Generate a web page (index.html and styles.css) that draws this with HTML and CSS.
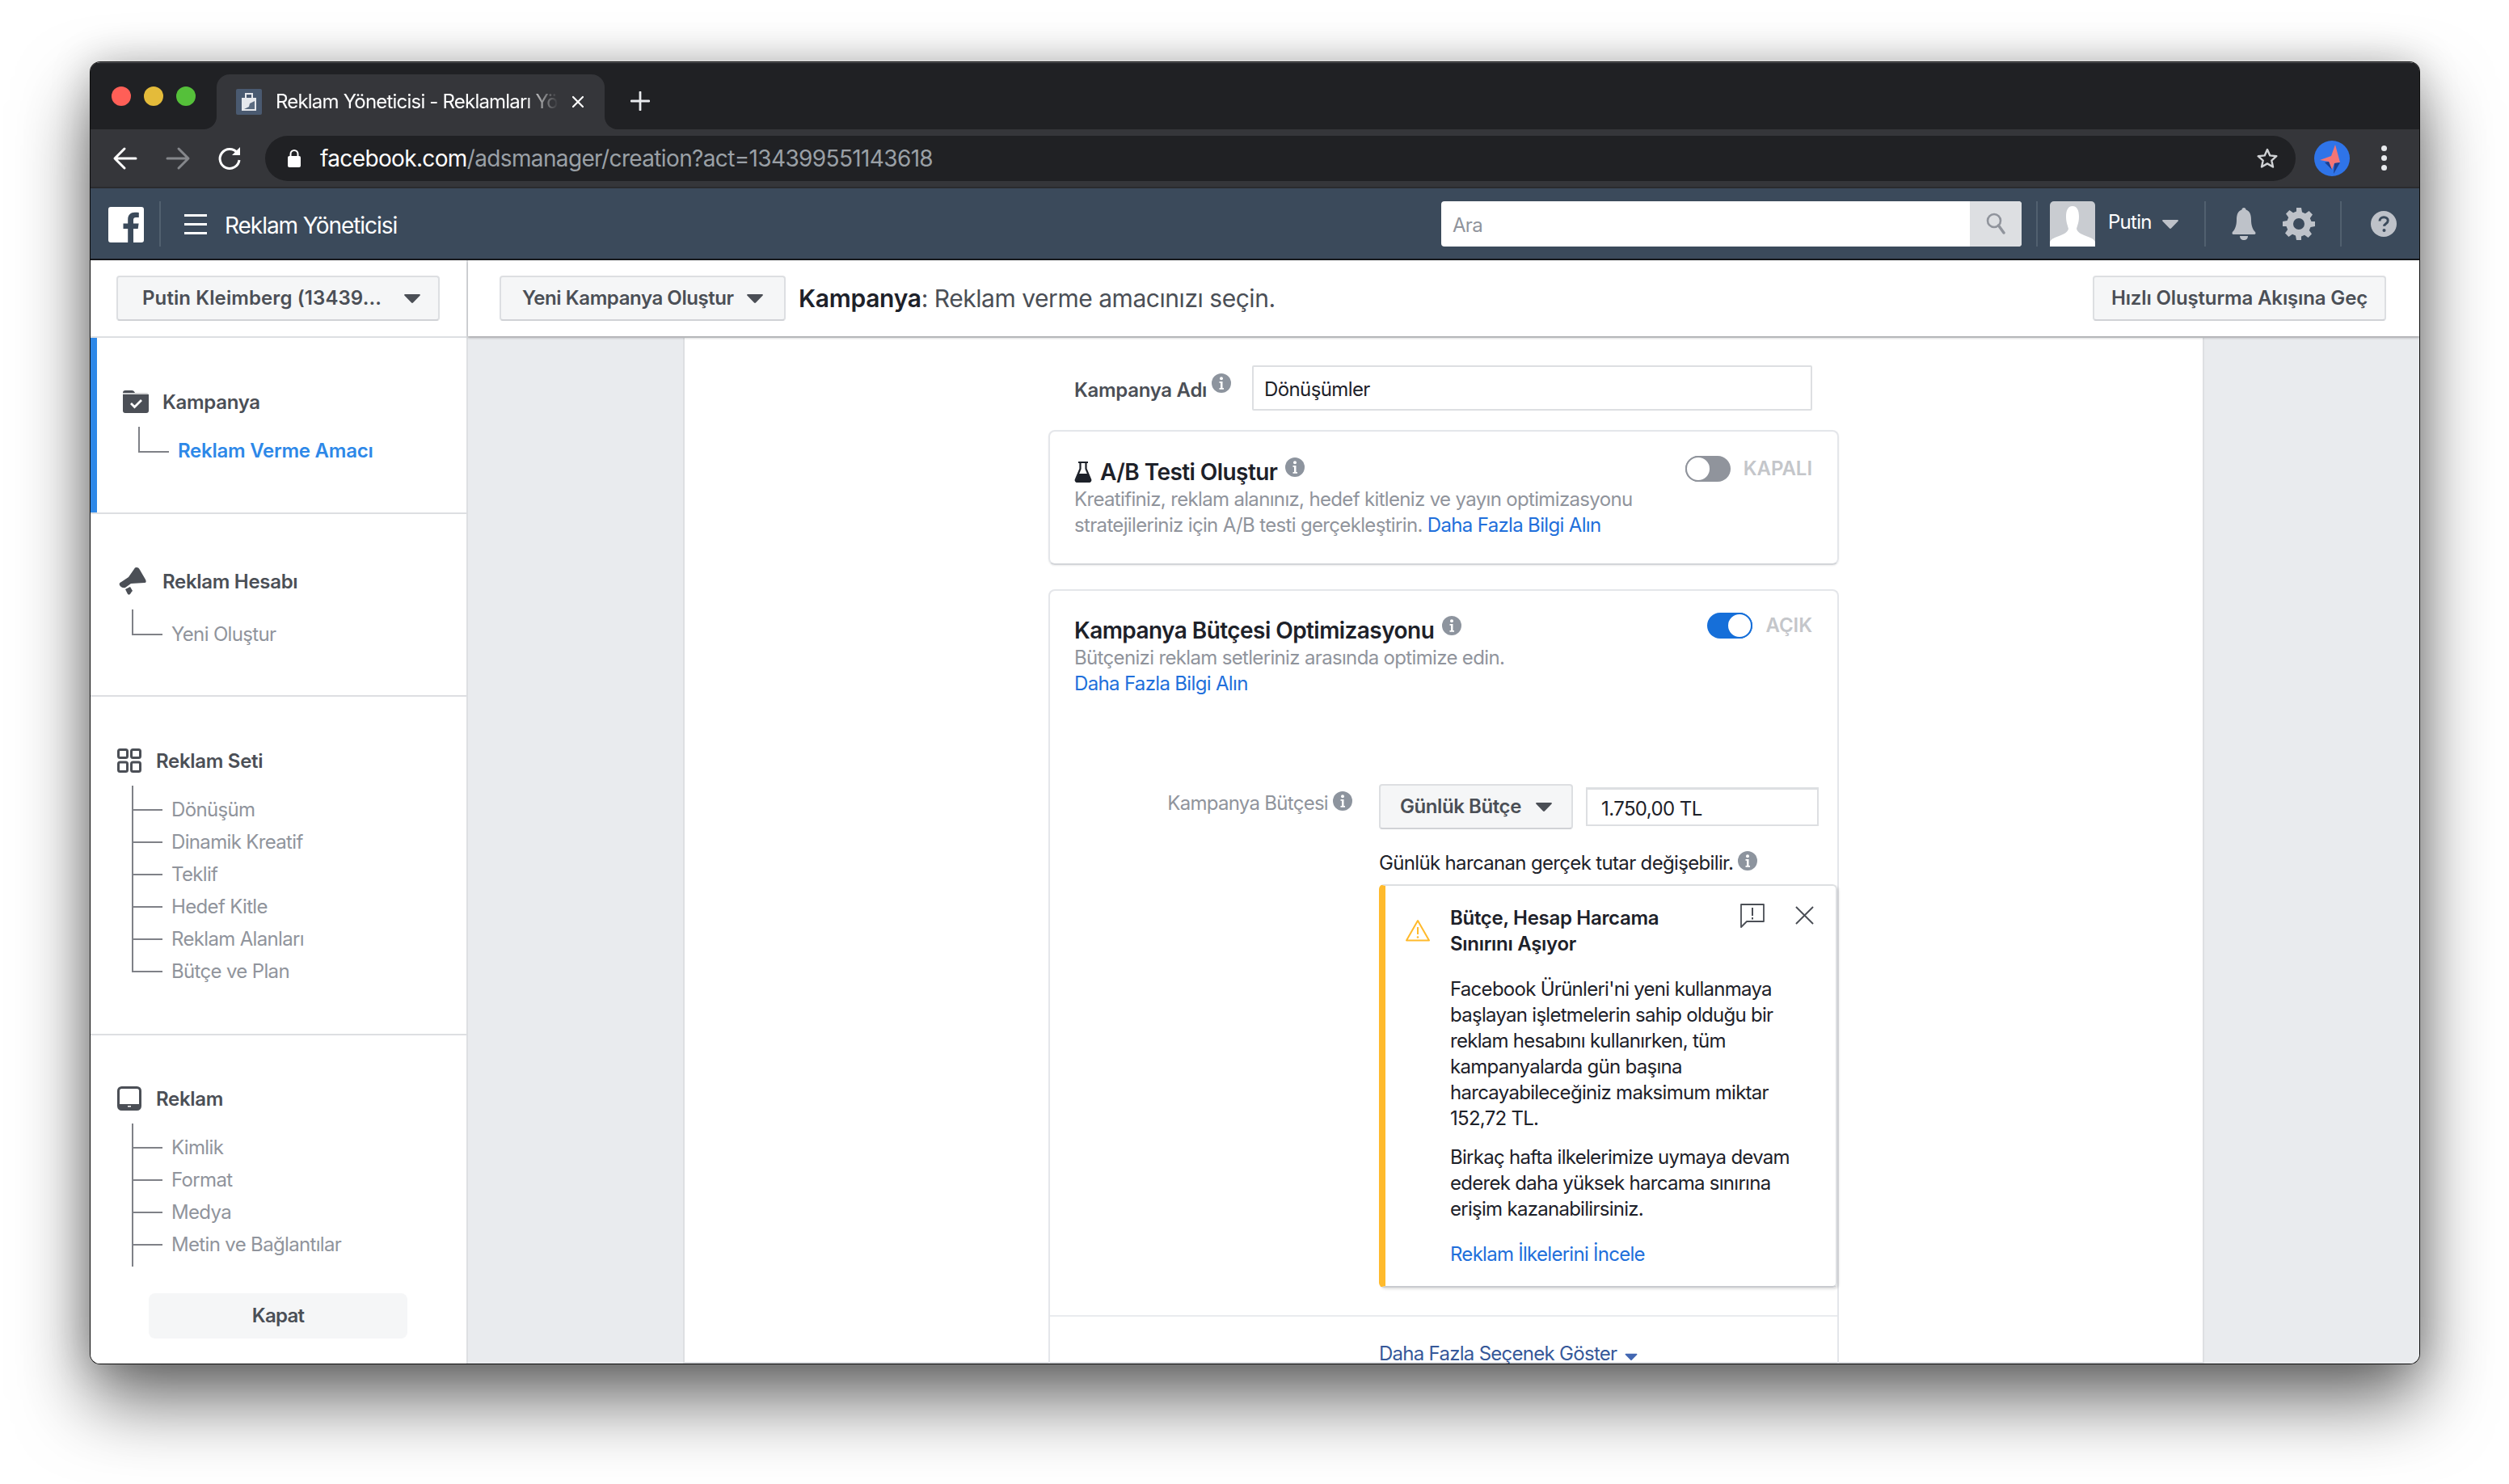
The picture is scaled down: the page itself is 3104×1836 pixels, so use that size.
FILE: index.html
```html
<!DOCTYPE html>
<html lang="tr">

<head>
  <meta charset="UTF-8">
  <title>Reklam Yöneticisi</title>
  <link rel="stylesheet" href="styles.css">
</head>

<body>
  <svg class="defs" width="0" height="0">
    <symbol id="i-info" viewBox="0 0 24 24">
      <circle cx="12" cy="12" r="12" fill="#8d949e" />
      <circle cx="12" cy="6.200" r="2" fill="#fff" />
      <path d="M9.500 10h4v8H15v1.800H9.500V18H11v-6.200H9.500z" fill="#fff" />
    </symbol>
    <symbol id="i-caret" viewBox="0 0 20 12">
      <path d="M1 1h18a1 1 0 0 1 .7 1.600l-8.500 8.600a1.600 1.600 0 0 1-2.400 0L.3 2.600A1 1 0 0 1 1 1z" />
    </symbol>
  </svg>

  <div class="window">
    <!-- browser chrome -->
    <div class="tabstrip">
      <div class="strip-left">
        <span class="light red"></span>
        <span class="light yellow"></span>
        <span class="light green"></span>
      </div>
      <div class="tab">
        <svg class="favicon" viewBox="0 0 32 32">
          <rect width="32" height="32" rx="2" fill="#4a5a70" />
          <rect x="7" y="11" width="18" height="16" fill="#e6e8ec" />
          <path d="M12 11V6h8v5" fill="none" stroke="#e6e8ec" stroke-width="2" />
          <path d="M10 25l6-3 1-4 6-3v10z" fill="#5b6b80" />
        </svg>
        <span class="tab-title">Reklam Yöneticisi - Reklamları Yönetin</span>
        <svg class="tab-close" viewBox="0 0 16 16">
          <path d="M2 2l12 12M14 2L2 14" stroke="#fff" stroke-width="2.200" stroke-linecap="round" />
        </svg>
      </div>
      <div class="strip-right">
        <svg class="tab-new" viewBox="0 0 24 24">
          <path d="M12 1v22M1 12h22" stroke="#e8eaed" stroke-width="2.800" stroke-linecap="round" />
        </svg>
      </div>
    </div>

    <div class="toolbar">
      <svg class="nav-icon" viewBox="0 0 32 32">
        <path d="M29 16H4M15 4L3 16l12 12" fill="none" stroke="#fff" stroke-width="3" stroke-linecap="round" stroke-linejoin="round" />
      </svg>
      <svg class="nav-icon forward" viewBox="0 0 32 32">
        <path d="M3 16h25M17 4l12 12-12 12" fill="none" stroke="#85878b" stroke-width="3" stroke-linecap="round" stroke-linejoin="round" />
      </svg>
      <svg class="nav-icon reload" viewBox="0 0 32 32">
        <path d="M25.500 9A12 12 0 1 0 28 18" fill="none" stroke="#fff" stroke-width="3" />
        <path d="M29 2v10H19z" fill="#fff" />
      </svg>
      <div class="urlbar">
        <svg class="lock" viewBox="0 0 16 22">
          <rect y="8" width="16" height="14" rx="2" fill="#fff" />
          <path d="M3.500 9V5.500a4.500 4.500 0 0 1 9 0V9" fill="none" stroke="#fff" stroke-width="2" />
        </svg>
        <span class="url"><b>facebook.com</b>/adsmanager/creation?act=134399551143618</span>
        <svg class="star" viewBox="0 0 28 28">
          <path d="M14 3l3.300 7.400 8 .8-6 5.400 1.700 7.900L14 20.400 7 24.500l1.700-7.900-6-5.400 8-.8z" fill="none" stroke="#d0d2d5" stroke-width="2.400" stroke-linejoin="round" />
        </svg>
      </div>
      <svg class="profile" viewBox="0 0 44 44">
        <circle cx="22" cy="22" r="22" fill="#2f74e8" />
        <path d="M26 5l6 22-7 1-3 8-4-10-11-2 14-5z" fill="#f47575" />
        <path d="M22 36l-4-10-5 1z" fill="#1c3f8f" />
        <path d="M32 27l-8 14 1-13z" fill="#1c3f8f" />
      </svg>
      <div class="menu-dots"><span></span><span></span><span></span></div>
    </div>

    <!-- ads manager header -->
    <header class="fbbar">
      <svg class="fb-logo" viewBox="0 0 44 44">
        <path d="M3 0h38a3 3 0 0 1 3 3v38a3 3 0 0 1-3 3H31V27h5.700l.9-6.600H31v-4.200c0-1.900.5-3.200 3.300-3.200h3.500V7.100c-.6-.1-2.700-.3-5.100-.3-5 0-8.500 3.100-8.500 8.700v4.900h-5.700V27h5.700v17H3a3 3 0 0 1-3-3V3a3 3 0 0 1 3-3z" fill="#fff" />
      </svg>
      <span class="fb-sep"></span>
      <div class="burger"><span></span><span></span><span></span></div>
      <span class="fb-title">Reklam Yöneticisi</span>
      <div class="search">
        <span class="search-text">Ara</span>
        <span class="search-btn">
          <svg viewBox="0 0 24 28" width="24" height="28">
            <circle cx="10" cy="10" r="8" fill="none" stroke="#90949c" stroke-width="2.600" />
            <path d="M15.500 16l6.500 9" stroke="#90949c" stroke-width="3.400" stroke-linecap="round" />
          </svg>
        </span>
      </div>
      <span class="fb-sep sep-a"></span>
      <svg class="user-pic" viewBox="0 0 56 56">
        <rect width="56" height="56" rx="5" fill="#c9ccd1" />
        <path d="M28 6c6 0 8 6 8 13 0 7-2 11-3 15 1 6 10 8 19 12 2 1 4 3 4 5v5H0v-5c0-2 2-4 4-5 9-4 18-6 19-12-1-4-3-8-3-15 0-7 2-13 8-13z" fill="#fff" />
      </svg>
      <span class="user-name">Putin</span>
      <svg class="user-caret"><use href="#i-caret" /></svg>
      <span class="fb-sep sep-b"></span>
      <svg class="bell" viewBox="0 0 30 40">
        <path d="M15 0c1.500 0 2.500 1 2.600 2.600C22.500 4 24 9 24 15c0 7 2 12 5 15 1 1 .5 3-1 3H2c-1.500 0-2-2-1-3 3-3 5-8 5-15 0-6 1.500-11 6.400-12.400C12.500 1 13.500 0 15 0z" fill="#bec2c9" />
        <path d="M10 35h10c0 3-2 5-5 5s-5-2-5-5z" fill="#bec2c9" />
      </svg>
      <svg class="gear" viewBox="0 0 40 40">
        <path d="M17 0h6l1 5.500 4 1.700 4.600-3.200 4.400 4.400-3.200 4.600 1.700 4L40 17v6l-5.500 1-1.700 4 3.200 4.600-4.400 4.400-4.600-3.200-4 1.700L23 40h-6l-1-5.500-4-1.700-4.600 3.200L3 31.600l3.200-4.600-1.700-4L0 23v-6l5.500-1 1.700-4L4 7.400 8.400 3 13 6.200l4-1.700zM20 13a7 7 0 1 0 0 14 7 7 0 0 0 0-14z" fill="#bec2c9" fill-rule="evenodd" />
      </svg>
      <span class="fb-sep sep-c"></span>
      <svg class="help" viewBox="0 0 32 32">
        <circle cx="16" cy="16" r="16" fill="#bec2c9" />
        <path d="M11 12.500c0-3 2.200-4.700 5.200-4.700 3 0 5 1.700 5 4.200 0 3.800-4.600 3.600-4.600 6.800" fill="none" stroke="#3b4a5b" stroke-width="3" />
        <circle cx="16.500" cy="24" r="2" fill="#3b4a5b" />
      </svg>
    </header>

    <div class="subbar">
      <div class="sub-left">
        <button class="btn btn-account">
          <span>Putin Kleimberg (13439...</span>
          <svg class="btn-caret"><use href="#i-caret" /></svg>
        </button>
      </div>
      <div class="sub-right">
        <button class="btn btn-new">
          <span>Yeni Kampanya Oluştur</span>
          <svg class="btn-caret"><use href="#i-caret" /></svg>
        </button>
        <div class="sub-title"><b>Kampanya</b>: Reklam verme amacınızı seçin.</div>
        <button class="btn btn-quick">Hızlı Oluşturma Akışına Geç</button>
      </div>
    </div>

    <div class="content">
      <!-- left tree -->
      <aside class="sidebar">
        <section class="side-section active s-campaign">
          <div class="side-head">
            <svg class="ic-folder" viewBox="0 0 32 28">
              <path d="M3 0h8c2 0 3 1 4 3h14a3 3 0 0 1 3 3v19a3 3 0 0 1-3 3H3a3 3 0 0 1-3-3V3a3 3 0 0 1 3-3z" fill="#4b4f56" />
              <path d="M0 4h32" stroke="#fff" stroke-width="1.500" />
              <path d="M10 16l4.500 4.500L23 12" fill="none" stroke="#fff" stroke-width="2.800" />
            </svg>
            <span>Kampanya</span>
          </div>
          <ul class="tree tree-end">
            <li class="current">Reklam Verme Amacı</li>
          </ul>
        </section>

        <section class="side-section s-account">
          <div class="side-head">
            <svg class="ic-horn" viewBox="0 0 34 34">
              <path d="M22 0c2 0 3 1 4 3l7 12c1 2 1 4-1 4l-17 1-7 5c-3 1-6-1-7-3-1-2 0-3 2-4l9-6 7-10c1-2 2-2 3-2z" fill="#4b4f56" />
              <path d="M8 27l6-3 3 5-1 1-2 3c-1 1-2 1-3 0z" fill="#4b4f56" />
            </svg>
            <span>Reklam Hesabı</span>
          </div>
          <ul class="tree tree-end">
            <li>Yeni Oluştur</li>
          </ul>
        </section>

        <section class="side-section s-set">
          <div class="side-head">
            <svg class="ic-grid" viewBox="0 0 30 30">
              <g fill="none" stroke="#4b4f56" stroke-width="3">
                <rect x="1.500" y="1.500" width="11" height="10" rx="2" />
                <rect x="17.500" y="1.500" width="11" height="10" rx="2" />
                <rect x="1.500" y="17" width="11" height="11.500" rx="2" />
                <rect x="17.500" y="17" width="11" height="11.500" rx="2" />
              </g>
            </svg>
            <span>Reklam Seti</span>
          </div>
          <ul class="tree tree-end">
            <li>Dönüşüm</li>
            <li>Dinamik Kreatif</li>
            <li>Teklif</li>
            <li>Hedef Kitle</li>
            <li>Reklam Alanları</li>
            <li>Bütçe ve Plan</li>
          </ul>
        </section>

        <section class="side-section s-ad">
          <div class="side-head">
            <svg class="ic-tablet" viewBox="0 0 30 30">
              <rect x="1.500" y="1.500" width="27" height="27" rx="4" fill="none" stroke="#4b4f56" stroke-width="3" />
              <path d="M2 22h26v5H2z" fill="#4b4f56" />
              <rect x="13" y="24" width="4" height="1.500" fill="#fff" />
            </svg>
            <span>Reklam</span>
          </div>
          <ul class="tree tree-open">
            <li>Kimlik</li>
            <li>Format</li>
            <li>Medya</li>
            <li>Metin ve Bağlantılar</li>
          </ul>
          <button class="close-btn">Kapat</button>
        </section>
      </aside>

      <!-- form column -->
      <main class="main">
        <div class="column">
          <div class="form">
            <div class="name-row">
              <label class="name-label">Kampanya Adı <svg class="info"><use href="#i-info" /></svg></label>
              <div class="name-input">Dönüşümler</div>
            </div>

            <div class="card card-ab">
              <div class="card-head">
                <div class="card-title">
                  <svg class="flask" viewBox="0 0 22 26">
                    <path d="M5 1h12M7.500 1v8L2 22a2 2 0 0 0 2 3h14a2 2 0 0 0 2-3L14.500 9V1" fill="none" stroke="#1d2129" stroke-width="2.200" />
                    <path d="M5.500 15h11l4 9H2z" fill="#1d2129" />
                  </svg>
                  <span>A/B Testi Oluştur</span>
                  <svg class="info"><use href="#i-info" /></svg>
                </div>
                <div class="switch-wrap">
                  <span class="toggle"><i></i></span>
                  <span class="switch-text">KAPALI</span>
                </div>
              </div>
              <p class="card-desc">Kreatifiniz, reklam alanınız, hedef kitleniz ve yayın optimizasyonu<br>stratejileriniz için A/B testi gerçekleştirin. <a href="#">Daha Fazla Bilgi Alın</a></p>
            </div>

            <div class="card card-budget">
              <div class="card-head">
                <div class="card-title">
                  <span>Kampanya Bütçesi Optimizasyonu</span>
                  <svg class="info"><use href="#i-info" /></svg>
                </div>
                <div class="switch-wrap">
                  <span class="toggle on"><i></i></span>
                  <span class="switch-text">AÇIK</span>
                </div>
              </div>
              <p class="card-desc">Bütçenizi reklam setleriniz arasında optimize edin.<br><a href="#">Daha Fazla Bilgi Alın</a></p>

              <div class="budget-row">
                <div class="budget-label">Kampanya Bütçesi <svg class="info"><use href="#i-info" /></svg></div>
                <button class="btn btn-daily">
                  <span>Günlük Bütçe</span>
                  <svg class="btn-caret"><use href="#i-caret" /></svg>
                </button>
                <div class="budget-input">1.750,00 TL</div>
              </div>

              <div class="indented budget-note">Günlük harcanan gerçek tutar değişebilir. <svg class="info"><use href="#i-info" /></svg></div>

              <div class="indented alert">
                <svg class="alert-icon" viewBox="0 0 32 28">
                  <path d="M16 2L2 26.500h28z" fill="none" stroke="#ffba2c" stroke-width="2" stroke-linejoin="round" />
                  <path d="M16 10v9" stroke="#ffba2c" stroke-width="2" />
                  <circle cx="16" cy="22.500" r="1.300" fill="#ffba2c" />
                </svg>
                <div class="alert-body">
                  <div class="alert-top">
                    <h4>Bütçe, Hesap Harcama<br>Sınırını Aşıyor</h4>
                    <div class="alert-actions">
                      <svg class="feedback" viewBox="0 0 30 30">
                        <path d="M1 1h28v21H8l-7 7z" fill="none" stroke="#4b4f56" stroke-width="1.800" stroke-linejoin="round" />
                        <path d="M15 5v10M15 17v2.500" stroke="#4b4f56" stroke-width="2" />
                      </svg>
                      <svg class="alert-close" viewBox="0 0 24 24">
                        <path d="M1 1l22 22M23 1L1 23" stroke="#4b4f56" stroke-width="2" />
                      </svg>
                    </div>
                  </div>
                  <p>Facebook Ürünleri'ni yeni kullanmaya<br>başlayan işletmelerin sahip olduğu bir<br>reklam hesabını kullanırken, tüm<br>kampanyalarda gün başına<br>harcayabileceğiniz maksimum miktar<br>152,72 TL.</p>
                  <p>Birkaç hafta ilkelerimize uymaya devam<br>ederek daha yüksek harcama sınırına<br>erişim kazanabilirsiniz.</p>
                  <a class="alert-link" href="#">Reklam İlkelerini İncele</a>
                </div>
              </div>

              <div class="card-divider"></div>

              <a class="indented more-link" href="#">Daha Fazla Seçenek Göster
                <svg class="more-caret"><use href="#i-caret" /></svg>
              </a>
            </div>
          </div>
        </div>
      </main>
    </div>
  </div>
</body>

</html>
```

FILE: styles.css
```css
html,
body {
  margin: 0;
  padding: 0;
  height: 1836px;
  overflow: hidden;
  background: #fff;
}

body {
  font-family: Inter, "Noto Sans", sans-serif;
  font-size: 24px;
  line-height: 32px;
  letter-spacing: -.72px;
  color: #1d2129;
}

a {
  color: #216fdb;
  text-decoration: none;
}

p {
  margin: 0;
}

button {
  font: inherit;
  letter-spacing: inherit;
}

svg {
  flex: none;
}

.defs {
  display: block;
  height: 0;
}

/* window */
.window {
  margin: 77px 0 0 112px;
  width: 2881px;
  height: 1610px;
  display: flex;
  flex-direction: column;
  overflow: hidden;
  border-radius: 12px;
  background: #fff;
  box-shadow: 0 0 0 1px #0c0c0c, 0 46px 90px rgba(0, 0, 0, .58), 0 0 50px rgba(0, 0, 0, .22);
}

/* tab strip */
.tabstrip {
  height: 83px;
  flex: none;
  display: flex;
  background: linear-gradient(#202124 60%, #35363a 60%);
  border-top: 1px solid #55565a;
  box-sizing: border-box;
}

.strip-left {
  width: 156px;
  display: flex;
  gap: 16px;
  padding: 29px 0 0 26px;
  box-sizing: border-box;
  background: #202124;
  border-bottom-right-radius: 16px;
}

.light {
  width: 24px;
  height: 24px;
  border-radius: 50%;
}

.red {
  background: #ff5f57;
}

.yellow {
  background: #e4bb3a;
}

.green {
  background: #55c03a;
}

.tab {
  width: 480px;
  height: 68px;
  margin-top: 14px;
  display: flex;
  align-items: center;
  padding: 0 24px;
  box-sizing: border-box;
  background: #35363a;
  border-radius: 16px 16px 0 0;
}

.favicon {
  width: 32px;
  height: 32px;
}

.tab-title {
  margin-left: 17px;
  width: 350px;
  flex: none;
  white-space: nowrap;
  overflow: hidden;
  color: #fff;
  letter-spacing: -.8px;
  -webkit-mask-image: linear-gradient(90deg, #000 88%, transparent 100%);
  mask-image: linear-gradient(90deg, #000 88%, transparent 100%);
}

.tab-close {
  width: 16px;
  height: 16px;
  margin-left: 16px;
}

.strip-right {
  flex: 1;
  background: #202124;
  border-bottom-left-radius: 16px;
  display: flex;
  padding: 35px 0 0 32px;
  box-sizing: border-box;
}

.tab-new {
  width: 24px;
  height: 24px;
}

/* toolbar */
.toolbar {
  height: 73px;
  flex: none;
  box-sizing: border-box;
  display: flex;
  align-items: center;
  padding: 0 40px 0 27px;
  background: #35363a;
  border-bottom: 2px solid #2a2b2e;
}

.nav-icon {
  width: 32px;
  height: 32px;
}

.forward {
  margin-left: 33px;
}

.reload {
  margin-left: 32px;
}

.urlbar {
  flex: 1;
  height: 56px;
  margin-left: 28px;
  display: flex;
  align-items: center;
  padding: 0 21px 0 28px;
  border-radius: 28px;
  background: #202124;
}

.lock {
  width: 16px;
  height: 22px;
}

.url {
  margin-left: 24px;
  flex: 1;
  font-size: 28px;
  letter-spacing: -.64px;
  color: #9aa0a6;
}

.url b {
  font-weight: 400;
  color: #fff;
}

.star {
  width: 28px;
  height: 28px;
}

.profile {
  width: 44px;
  height: 44px;
  margin-left: 23px;
}

.menu-dots {
  margin-left: 39px;
  display: flex;
  flex-direction: column;
  gap: 5px;
}

.menu-dots span {
  width: 7px;
  height: 7px;
  border-radius: 50%;
  background: #e8eaed;
}

/* ads manager bar */
.fbbar {
  height: 89px;
  flex: none;
  box-sizing: border-box;
  display: flex;
  align-items: center;
  padding: 0 28px 0 22px;
  background: #3b4a5b;
  border-bottom: 2px solid #16181c;
}

.fb-logo {
  width: 44px;
  height: 44px;
  margin-top: 2px;
}

.fb-sep {
  width: 2px;
  height: 56px;
  margin-left: 19px;
  background: #51606f;
}

.burger {
  margin: 2px 0 0 29px;
  width: 28px;
  display: flex;
  flex-direction: column;
  gap: 8px;
}

.burger span {
  height: 3px;
  background: #fff;
}

.fb-title {
  margin: 5px 0 0 22px;
  font-size: 28px;
  letter-spacing: -1.05px;
  color: #fff;
}

.search {
  margin-left: auto;
  width: 718px;
  height: 56px;
  display: flex;
  align-items: center;
  justify-content: space-between;
  overflow: hidden;
  border-radius: 4px;
  background: #fff;
}

.search-text {
  margin: 5px 0 0 14px;
  color: #90949c;
}

.search-btn {
  width: 64px;
  height: 56px;
  display: flex;
  align-items: center;
  justify-content: center;
  background: #dddfe2;
}

.sep-a {
  margin-left: 18px;
}

.user-pic {
  width: 56px;
  height: 56px;
  margin-left: 15px;
}

.user-name {
  width: 64px;
  margin-left: 16px;
  margin-top: -4px;
  color: #fff;
}

.user-caret {
  width: 20px;
  height: 12px;
  margin-left: 3px;
  fill: #bec2c9;
}

.sep-b {
  margin-left: 32px;
}

.bell {
  width: 38px;
  height: 40px;
  margin-left: 28px;
}

.gear {
  width: 40px;
  height: 40px;
  margin-left: 29px;
}

.sep-c {
  margin-left: 31px;
}

.help {
  width: 32px;
  height: 32px;
  margin-left: 36px;
}

/* buttons */
.btn {
  height: 56px;
  display: flex;
  align-items: center;
  justify-content: space-between;
  box-sizing: border-box;
  border: 2px solid #dddfe2;
  border-bottom-color: #d0d2d6;
  border-radius: 4px;
  background: #f5f6f7;
  color: #4b4f56;
  font-weight: 600;
  letter-spacing: -.42px;
  white-space: nowrap;
}

.btn-caret {
  width: 20px;
  height: 12px;
  fill: #4b4f56;
}

/* sub header */
.subbar {
  height: 96px;
  flex: none;
  display: flex;
  box-sizing: border-box;
  position: relative;
  z-index: 1;
  background: #fff;
  border-bottom: 2px solid #dddfe2;
}

.sub-left {
  width: 467px;
  flex: none;
  box-sizing: border-box;
  display: flex;
  align-items: center;
  padding-left: 32px;
  border-right: 2px solid #dddfe2;
}

.sub-right {
  flex: 1;
  display: flex;
  align-items: center;
  padding: 0 41px 0 39px;
  box-shadow: 0 2px 3px rgba(0, 0, 0, .25);
}

.btn-account {
  width: 400px;
  padding: 0 22px 0 30px;
  letter-spacing: .1px;
}

.btn-new {
  width: 354px;
  padding: 0 26px;
}

.sub-title {
  margin-left: 16px;
  font-size: 30px;
  letter-spacing: -.46px;
  color: #4b4f56;
}

.sub-title b {
  font-weight: 600;
  letter-spacing: -.3px;
  color: #1d2129;
}

.btn-quick {
  margin-left: auto;
  width: 363px;
  justify-content: center;
  letter-spacing: -.14px;
}

/* content */
.content {
  flex: 1;
  min-height: 0;
  display: flex;
}

.sidebar {
  width: 467px;
  flex: none;
  box-sizing: border-box;
  border-right: 2px solid #dddfe2;
  background: #fff;
}

.side-section {
  border-bottom: 2px solid #dddfe2;
}

.active {
  box-shadow: inset 8px 0 0 #2d88e8;
}

.s-campaign {
  padding: 63px 0 55px 0;
}

.s-account {
  padding: 67px 0 55px 0;
}

.s-set {
  padding: 63px 0 57px 0;
}

.s-ad {
  padding: 62px 0 0 0;
  border-bottom: none;
}

.side-head {
  height: 32px;
  display: flex;
  align-items: center;
  font-weight: 600;
  letter-spacing: -.3px;
  color: #4b4f56;
}

.side-head span {
  margin-top: 2px;
}

.s-campaign .side-head {
  padding-left: 40px;
  gap: 17px;
}

.s-account .side-head {
  padding-left: 35px;
  gap: 20px;
}

.s-set .side-head,
.s-ad .side-head {
  padding-left: 33px;
  gap: 18px;
}

.ic-folder {
  width: 32px;
  height: 28px;
}

.ic-horn {
  width: 34px;
  height: 34px;
}

.ic-grid,
.ic-tablet {
  width: 30px;
  height: 30px;
}

/* tree lines are drawn as backgrounds of the list and its rows */
.tree {
  list-style: none;
  margin: 15px 0 0 51px;
  padding: 10px 0 0 0;
  --line: linear-gradient(#7f8187, #7f8187);
}

.s-campaign .tree {
  margin-left: 59px;
  padding-top: 11px;
}

.s-account .tree {
  margin-top: 19px;
  padding-top: 11px;
}

.tree li {
  height: 40px;
  line-height: 40px;
  padding-left: 49px;
  color: #90949c;
  letter-spacing: -.66px;
  background:
    var(--line) left center / 38px 2px no-repeat,
    var(--line) left top / 2px 100% no-repeat;
}

.tree-end {
  background: var(--line) left top / 2px 12px no-repeat;
}

.tree-end li:last-child {
  background:
    var(--line) left center / 38px 2px no-repeat,
    var(--line) left top / 2px 50% no-repeat;
}

.tree-open {
  padding-bottom: 7px;
  background: var(--line) left top / 2px 100% no-repeat;
}

.tree .current {
  color: #2d88e8;
  font-weight: 600;
  line-height: 38px;
  letter-spacing: -.25px;
}

.close-btn {
  display: block;
  width: 320px;
  height: 56px;
  margin: 33px 0 0 72px;
  border: none;
  border-radius: 8px;
  background: #f5f6f7;
  color: #4b4f56;
  font-weight: 600;
}

.main {
  flex: 1;
  min-width: 0;
  overflow: hidden;
  display: flex;
  justify-content: center;
  background: #e9ebee;
}

.column {
  width: 1882px;
  box-sizing: border-box;
  display: flex;
  justify-content: center;
  background: #fff;
  border: 2px solid #dddfe2;
  border-top: none;
}

.form {
  width: 978px;
  flex: none;
}

.info {
  width: 24px;
  height: 24px;
  vertical-align: -1px;
}

.name-row {
  display: flex;
  align-items: center;
  height: 56px;
  margin: 34px 0 24px;
  padding-left: 32px;
}

.name-label {
  width: 220px;
  height: 32px;
  margin-top: -4px;
  flex: none;
  font-weight: 600;
  letter-spacing: -.3px;
  color: #4b4f56;
}

.name-label .info {
  vertical-align: 5px;
}

.name-input {
  width: 693px;
  height: 56px;
  box-sizing: border-box;
  padding-left: 13px;
  line-height: 56px;
  letter-spacing: -.6px;
  border: 2px solid #dddfe2;
  border-radius: 2px;
}

.card {
  box-sizing: border-box;
  border: 2px solid #e4e6ea;
  border-bottom-color: #d3d5d9;
  border-radius: 8px;
  padding-left: 30px;
}

.card-ab {
  height: 167px;
  margin-bottom: 30px;
  padding-top: 32px;
  box-shadow: 0 1px 2px rgba(0, 0, 0, .08);
}

.card-budget {
  padding-top: 31px;
  padding-bottom: 60px;
}

.card-head {
  display: flex;
  justify-content: space-between;
  padding-right: 31px;
  height: 36px;
}

.card-title {
  display: flex;
  align-items: center;
  gap: 10px;
  font-size: 28px;
  line-height: 36px;
  letter-spacing: -.56px;
  font-weight: 600;
}

.card-title .info {
  margin-top: -12px;
}

.flask {
  width: 22px;
  height: 26px;
}

.switch-wrap {
  display: flex;
  align-items: flex-start;
  gap: 16px;
  margin-top: -2px;
  font-weight: 600;
  color: #c4c6ca;
}

.card-budget .switch-wrap {
  margin-top: -4px;
}

.switch-text {
  letter-spacing: -.05px;
}

.toggle {
  width: 56px;
  height: 32px;
  display: flex;
  border-radius: 16px;
  background: #90949c;
}

.toggle i {
  width: 32px;
  height: 32px;
  box-sizing: border-box;
  border: 2px solid #90949c;
  border-radius: 50%;
  background: #fff;
}

.toggle.on {
  justify-content: flex-end;
  background: #166fd9;
}

.toggle.on i {
  border-color: #166fd9;
}

.card-desc {
  color: #90949c;
  letter-spacing: -.66px;
}

.budget-row {
  display: flex;
  align-items: center;
  margin-top: 108px;
}

.budget-label {
  width: 344px;
  height: 32px;
  margin-right: 33px;
  margin-top: -8px;
  flex: none;
  text-align: right;
  color: #90949c;
}

.btn-daily {
  width: 240px;
  padding: 0 24px;
}

.budget-input {
  width: 288px;
  height: 48px;
  margin-left: 16px;
  padding-left: 17px;
  box-sizing: border-box;
  line-height: 47px;
  letter-spacing: -.6px;
  border: 2px solid #dddfe2;
  border-top-width: 3px;
}

.indented {
  margin-left: 377px;
}

.budget-note {
  height: 32px;
  margin-top: 26px;
  letter-spacing: -.66px;
}

.alert {
  width: 567px;
  margin-top: 10px;
  box-sizing: border-box;
  height: 499px;
  display: flex;
  gap: 24px;
  padding: 24px 0 0 24px;
  border: 2px solid #dddfe2;
  border-left: 8px solid #ffba2c;
  border-bottom-color: #c9cbcf;
  border-radius: 6px;
  box-shadow: 2px 2px 3px rgba(0, 0, 0, .12);
}

.alert-icon {
  width: 32px;
  height: 28px;
  margin-top: 17px;
}

.alert-body {
  flex: 1;
  padding-right: 27px;
}

.alert-top {
  display: flex;
  justify-content: space-between;
}

.alert-top h4 {
  margin: 0;
  font-size: 24px;
  font-weight: 600;
  letter-spacing: -.3px;
}

.alert-actions {
  display: flex;
  gap: 38px;
  margin-top: -2px;
}

.feedback {
  width: 30px;
  height: 30px;
}

.alert-close {
  width: 23px;
  height: 23px;
  margin-top: 3px;
}

.alert-body p {
  margin-top: 24px;
}

.alert-body p + p {
  margin-top: 16px;
}

.alert-link {
  display: block;
  margin-top: 24px;
}

.card-divider {
  height: 2px;
  margin: 34px 0 30px -30px;
  background: #e9ebee;
}

.more-link {
  display: block;
  color: #365899;
}

.more-caret {
  width: 16px;
  height: 9px;
  margin-left: 4px;
  fill: #4267b2;
}
```
